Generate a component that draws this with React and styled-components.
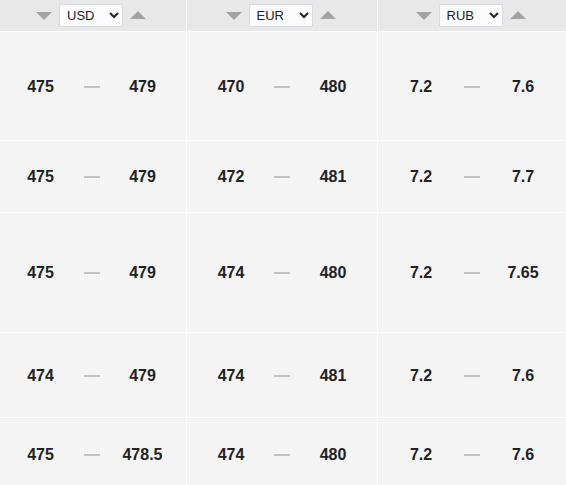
import { useState } from 'react';
import styled, { createGlobalStyle } from 'styled-components';

const GlobalStyle = createGlobalStyle`
  html, body {
    margin: 0;
    padding: 0;
    background: #fff;
  }
  body {
    font-family: "Liberation Sans", Arial, sans-serif;
  }
`;

const currencies = ['USD', 'EUR', 'RUB'];

const rows = [
  { h: 108, vals: [['475', '479'], ['470', '480'], ['7.2', '7.6']] },
  { h: 71, vals: [['475', '479'], ['472', '481'], ['7.2', '7.7']] },
  { h: 119, vals: [['475', '479'], ['474', '480'], ['7.2', '7.65']] },
  { h: 84, vals: [['474', '479'], ['474', '481'], ['7.2', '7.6']] },
  { h: 72, vals: [['475', '478.5'], ['474', '480'], ['7.2', '7.6']] },
];

const Table = styled.div`
  display: grid;
  grid-template-columns: 186px 190px 1fr;
  gap: 1px;
  background: #fff;
  width: 566px;
`;

const HeadCell = styled.div`
  height: 31px;
  background: #e8e8e8;
  display: flex;
  align-items: center;
  justify-content: center;
  gap: 7px;
  padding-right: ${(p) => (p.$first ? '4px' : '3px')};
  box-sizing: border-box;
`;

const Arrow = styled.span`
  width: 0;
  height: 0;
  border-left: 8px solid transparent;
  border-right: 8px solid transparent;
  ${(p) =>
    p.$up
      ? 'border-bottom: 8px solid #a3a3a3; margin-top: -1px;'
      : 'border-top: 8px solid #a3a3a3; margin-top: 1px;'}
  cursor: pointer;
`;

const Select = styled.select`
  width: 64px;
  height: 23px;
  font-family: "Liberation Sans", Arial, sans-serif;
  font-size: 13px;
  color: #222;
  background: #fcfcfd;
  border: 1px solid #d5dae2;
  border-radius: 2px;
  padding: 0 0 0 3px;
`;

const Cell = styled.div`
  height: ${(p) => p.$h}px;
  background: #f4f4f4;
  display: grid;
  grid-template-columns: 51px 51px 51px;
  justify-content: center;
  align-items: center;
  padding-right: ${(p) => (p.$first ? '3px' : '0')};
  padding-top: 1px;
  box-sizing: border-box;
`;

const Value = styled.span`
  text-align: center;
  font-weight: bold;
  font-size: 16px;
  color: #222;
`;

const Dash = styled.span`
  justify-self: center;
  width: 16px;
  height: 2px;
  background: #c2c2c2;
`;

function CurrencyHead({ value, first }) {
  const [cur, setCur] = useState(value);
  return (
    <HeadCell $first={first}>
      <Arrow />
      <Select value={cur} onChange={(e) => setCur(e.target.value)}>
        {currencies.map((c) => (
          <option key={c}>{c}</option>
        ))}
      </Select>
      <Arrow $up />
    </HeadCell>
  );
}

export default function App() {
  return (
    <>
      <GlobalStyle />
      <Table>
        {currencies.map((c, i) => (
          <CurrencyHead key={c} value={c} first={i === 0} />
        ))}
        {rows.map((r, ri) =>
          r.vals.map(([buy, sell], ci) => (
            <Cell key={ri + '-' + ci} $h={r.h} $first={ci === 0}>
              <Value>{buy}</Value>
              <Dash />
              <Value>{sell}</Value>
            </Cell>
          ))
        )}
      </Table>
    </>
  );
}
